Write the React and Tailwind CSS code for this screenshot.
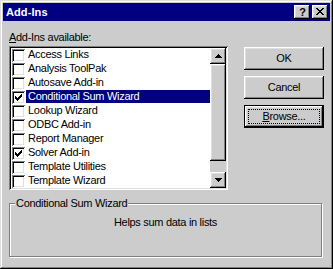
import React from 'react';

const items = [
  ['Access Links', false, false],
  ['Analysis ToolPak', false, false],
  ['Autosave Add-in', false, false],
  ['Conditional Sum Wizard', true, true],
  ['Lookup Wizard', false, false],
  ['ODBC Add-in', false, false],
  ['Report Manager', false, false],
  ['Solver Add-in', true, false],
  ['Template Utilities', false, false],
  ['Template Wizard', false, false],
];

const raised =
  'shadow-[inset_-1px_-1px_0_#000,inset_1px_1px_0_#fff,inset_-2px_-2px_0_#808080,inset_2px_2px_0_#dfdfdf]';
const sunken =
  'shadow-[inset_1px_1px_0_#808080,inset_-1px_-1px_0_#fff,inset_2px_2px_0_#000,inset_-2px_-2px_0_#dfdfdf]';

function Check() {
  return (
    <svg width="7" height="7" viewBox="0 0 7 7" shapeRendering="crispEdges" className="block">
      <path
        fill="#000"
        d="M6 0h1v1h-1z M5 1h2v1h-2z M0 2h1v1h-1z M4 2h3v1h-3z M0 3h2v1h-2z M3 3h3v1h-3z M0 4h5v1h-5z M1 5h3v1h-3z M2 6h1v1h-1z"
      />
    </svg>
  );
}

function Arrow({ down }) {
  return (
    <svg width="7" height="4" viewBox="0 0 7 4" shapeRendering="crispEdges" className="block">
      <path
        fill="#000"
        d={
          down
            ? 'M0 0h7v1h-7z M1 1h5v1h-5z M2 2h3v1h-3z M3 3h1v1h-1z'
            : 'M3 0h1v1h-1z M2 1h3v1h-3z M1 2h5v1h-5z M0 3h7v1h-7z'
        }
      />
    </svg>
  );
}

function CloseGlyph() {
  return (
    <svg width="8" height="7" viewBox="0 0 8 7" shapeRendering="crispEdges" className="block">
      <path
        fill="#000"
        d="M0 0h2v1h-2z M6 0h2v1h-2z M1 1h2v1h-2z M5 1h2v1h-2z M2 2h4v1h-4z M3 3h2v1h-2z M2 4h4v1h-4z M1 5h2v1h-2z M5 5h2v1h-2z M0 6h2v1h-2z M6 6h2v1h-2z"
      />
    </svg>
  );
}

export default function App() {
  return (
    <div
      className={`w-[333px] h-[269px] bg-[#cccccc] p-[3px] flex flex-col text-black text-[11px] tracking-[-0.3px] font-['Liberation_Sans',Arial,sans-serif] shadow-[inset_-1px_-1px_0_#000,inset_1px_1px_0_#dfdfdf,inset_-2px_-2px_0_#808080,inset_2px_2px_0_#fff]`}
    >
      {/* Title bar */}
      <div className="h-[18px] bg-[#000080] flex items-center pl-[3px] pr-[2px]">
        <span className="flex-1 text-white font-bold tracking-[0.1px] leading-[14px]">Add-Ins</span>
        <div className="flex gap-[2px]">
          <div className={`w-[16px] h-[14px] bg-[#cccccc] flex items-center justify-center ${raised}`}>
            <span className="font-bold text-[11px] leading-[11px] tracking-normal pl-[1px]">?</span>
          </div>
          <div className={`w-[16px] h-[14px] bg-[#cccccc] flex items-center justify-center pb-[1px] ${raised}`}>
            <CloseGlyph />
          </div>
        </div>
      </div>

      {/* Body */}
      <div className="flex flex-col pl-[6px]">
        <div className="flex">
          <div className="w-[219px] flex flex-col">
            <div className="mt-[10px] leading-[13px]">
              <span className="underline underline-offset-[1px]">A</span>dd-Ins available:
            </div>
            <div className={`mt-[2px] h-[144px] p-[2px] bg-white flex ${sunken}`}>
              <div className="w-[199px] flex flex-col">
                {items.map(([label, checked, selected]) => (
                  <div key={label} className="h-[14px] flex items-start">
                    <div
                      className={`ml-[1px] mt-[1px] w-[13px] h-[13px] bg-white flex items-center justify-center ${sunken}`}
                    >
                      {checked && <Check />}
                    </div>
                    <div
                      className={`ml-[1px] flex-1 h-[13px] pl-[2px] leading-[13px] whitespace-nowrap ${
                        selected ? 'bg-[#000080] text-white' : ''
                      }`}
                    >
                      {label}
                    </div>
                  </div>
                ))}
              </div>
              <div className="w-[16px] flex flex-col bg-[#cccccc]">
                <div className={`h-[16px] flex items-center justify-center pb-[1px] ${raised}`}>
                  <Arrow />
                </div>
                <div className={`h-[97px] ${raised}`} />
                <div className="flex-1" />
                <div className={`h-[16px] flex items-center justify-center ${raised}`}>
                  <Arrow down />
                </div>
              </div>
            </div>
          </div>

          <div className="ml-[16px] mt-[26px] w-[80px] flex flex-col gap-[6px]">
            <div className={`h-[23px] flex items-center justify-center leading-[13px] ${raised}`}>OK</div>
            <div className={`h-[23px] flex items-center justify-center leading-[13px] ${raised}`}>Cancel</div>
            <div className="h-[23px] border border-black">
              <div className={`h-full p-[3px] ${raised}`}>
                <div className="h-full border border-dotted border-black flex items-center justify-center leading-[13px]">
                  <span>
                    <span className="underline underline-offset-[1px]">B</span>rowse...
                  </span>
                </div>
              </div>
            </div>
          </div>
        </div>

        {/* Group box */}
        <div className="mt-[13px] relative w-[313px] h-[54px] border border-[#808080] shadow-[1px_1px_0_#fff,inset_1px_1px_0_#fff]">
          <div className="absolute left-[5px] top-[-7px] px-[1px] bg-[#cccccc] leading-[13px]">
            Conditional Sum Wizard
          </div>
          <div className="mt-[12px] text-center leading-[13px]">Helps sum data in lists</div>
        </div>
      </div>
    </div>
  );
}
